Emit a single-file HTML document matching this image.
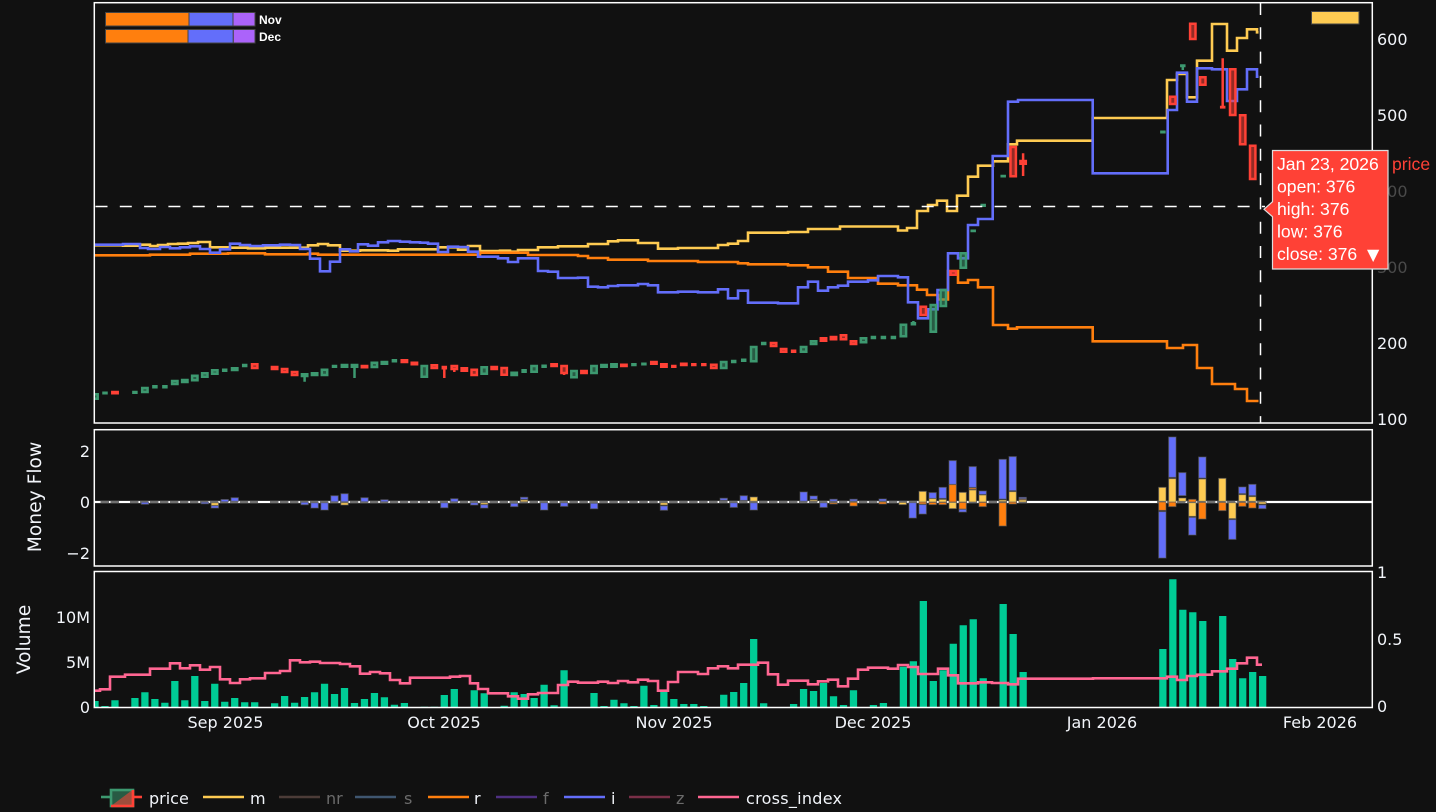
<!DOCTYPE html>
<html><head><meta charset="utf-8"><title>Chart</title>
<style>
html,body{margin:0;padding:0;background:#111;width:1436px;height:812px;overflow:hidden}
svg{display:block}
text{font-family:"DejaVu Sans",Verdana,sans-serif;font-size:16px;fill:#f2f5fa}
.a{font-family:"Liberation Sans",Arial,sans-serif;font-size:17.6px;fill:#fff}
.e{text-anchor:end}
.m{text-anchor:middle}
.t{font-size:18.7px}
.d{fill:#6b6b6b}
</style></head><body>
<svg width="1436" height="812" viewBox="0 0 1436 812" xmlns="http://www.w3.org/2000/svg">
<defs><clipPath id="c1"><rect x="94" y="3" width="1278" height="420"/></clipPath><clipPath id="c3"><rect x="94" y="571" width="1278" height="137"/></clipPath></defs>
<rect width="1436" height="812" fill="#111"/>

<!-- main panel lines -->
<g clip-path="url(#c1)" fill="none" stroke-width="2.6">
<path stroke="#fecb52" d="M94 245.3H123V245.7H140V244.7H150V246H158V245H168V244H178V243.7H188V243H198V242H210V247.3H230V247.7H248V248.3H265V247.7H308V245.3H318V244H328V245.3H340V250.7H360V250.3H388V250.7H398V249.3H438V247.3H458V249.7H468V246H480V251H500V250.7H510V251.7H518V250H538V247.3H558V246.3H588V244H608V241.3H618V240.3H638V243H658V248.7H678V248H718V245H728V243.7H738V241H748V232.7H788V232H808V229H840V226.5H898V230.5H907V228H917V211H928V205H937V200.7H947V211H957V195.7H968V176.7H978V165.7H993V161.3H1008V144.3H1017V140.7H1092.7V118H1167V80H1177V74H1187V97.3H1197V60.7H1212V24H1227V50.7H1237V38H1247V29.3H1257V32.3H1258.5"/>
<path stroke="#ff7f0e" d="M94 255.3H150V254.7H190V253.7H228V253.3H265V254.3H308V253.7H318V254.7H480V252.7H528V255H578V256H588V258H608V259.7H648V261H698V262H738V263.3H748V264.3H788V265.3H808V267.3H828V271.7H848V278H878V283.7H898V285.3H917V289.7H927V295H938V299.5H948V271H958V282.7H968V280H978V287.3H993V325H1008V328.7H1017V327.3H1092.7V341.3H1167V348H1183V345H1197V368H1212V384H1235V389H1247V401H1258.5"/>
<path stroke="#636efa" d="M94 244.7H123V244H140V248H148V249H160V247H170V248.3H180V247.3H190V246.3H200V249H210V252.7H220V249.3H230V243.7H240V245H250V246H263V245.3H280V244.7H290V245H300V249H310V258.7H320V271.3H330V261.7H340V249.3H350V251.3H358V244.3H368V245.7H378V242.3H388V241H400V241.7H410V242.3H420V242.7H428V243.7H438V252H448V246.7H458V247H468V251.7H478V256.7H498V258.3H508V262H518V258.3H538V271H548V271.7H558V278H578V277.7H588V286.7H598V287.3H608V286H618V285.3H638V284H648V285.3H658V292.3H678V291.7H698V292.3H718V289.3H728V298.3H738V290.7H748V302.7H778V303.3H798V287.3H808V281.7H818V290.7H828V287.3H838V285.7H848V281.7H868V280.3H878V276H898V277.3H908V302.3H918V318.3H928V309.3H937.5V290H948V253.3H958V258.3H968V225H978V219H992.7V156H1008V101.7H1018V100H1092.7V173.3H1167.7V110H1177V72.7H1187V101.7H1197V68.3H1212V69.3H1227V101H1237V89.3H1247V69.3H1257V76.7H1258.5"/>
<!-- green candles -->
<path stroke="#3d9970" stroke-width="2.5" fill="rgba(61,153,112,.55)" d="M92.3 394.3h5.4v4.4h-5.4zM103.5 392.7h3v.6h-3zM133.4 392h3v.7h-3zM142.2 388h5.4v4h-5.4zM153.4 386.3h3v1h-3zM163.4 386.3h3v1h-3zM172.1 381h5.4v3h-5.4zM182.1 380h5.4v2h-5.4zM192.1 375.7h5.4v4.6h-5.4zM202.1 373.3h5.4v3.4h-5.4zM212.1 370.3h5.4v3.4h-5.4zM223.2 369.7h3v1h-3zM232 368.3h5.4v1.7h-5.4zM243.2 365h3v1h-3zM301.9 374.3h5.4v1.7h-5.4zM304.6 377V381.7M311.9 373.3h5.4v1.7h-5.4zM321.8 369.7h5.4v5.3h-5.4zM333 366h3v.7h-3zM341.8 365h5.4v1.7h-5.4zM351.8 365h5.4v1.7h-5.4zM354.5 367.7V378M371.7 362.7h5.4v4.3h-5.4zM381.7 362h5.4v1.7h-5.4zM392.9 360.3h3v1h-3zM421.6 366h5.4v10.7h-5.4zM481.5 367.3h5.4v6.4h-5.4zM511.5 372.7h5.4v2.3h-5.4zM522.6 370.3h3v1.4h-3zM531.4 366h5.4v5.7h-5.4zM542.6 365.7h3v1h-3zM571.3 371h5.4v6.3h-5.4zM591.3 366h5.4v7h-5.4zM601.3 365h5.4v1.7h-5.4zM611.3 364.3h5.4v2.4h-5.4zM632.4 364.3h3v.7h-3zM642.4 363.7h3v.6h-3zM721 362h5.4v6h-5.4zM732.2 361h3v1h-3zM742.2 359.7h3v1h-3zM751 347h5.4v14.3h-5.4zM762.2 343h3v1h-3zM800.9 347h5.4v4.7h-5.4zM810.9 341.3h5.4v2.7h-5.4zM860.8 338.3h5.4v4h-5.4zM871.9 337h3v1h-3zM881.9 337h3v1h-3zM891.9 337h3v1h-3zM900.7 324.7h5.4v11.6h-5.4zM911.9 323.2h3v1h-3zM913.4 321V323M930.6 305h5.4v26.7h-5.4zM940.6 290h5.4v16h-5.4zM960.6 253.3h5.4v14.4h-5.4zM971.7 230.7h3v.3h-3zM981.7 205h3v.7h-3zM1001.7 176h3v.3h-3zM1161.4 131.7h3v.6h-3zM1181.3 65.5h3v.5h-3zM1182.8 66V70"/>
<!-- red candles -->
<path stroke="#ff4136" stroke-width="2.5" fill="rgba(255,65,54,.55)" d="M112.3 392h5.4v1.3h-5.4zM252 364.3h5.4v3.7h-5.4zM271.9 367h5.4v2h-5.4zM281.9 369h5.4v3h-5.4zM291.9 372h5.4v3h-5.4zM361.8 366h5.4v1.3h-5.4zM401.7 360.3h5.4v1.7h-5.4zM411.7 362.7h5.4v1.6h-5.4zM431.6 365.3h5.4v2.7h-5.4zM442.8 367h3v1.3h-3zM444.3 368V378M451.6 366h5.4v3h-5.4zM454.3 370V372M461.6 368.3h5.4v2.4h-5.4zM471.5 369.7h5.4v5.3h-5.4zM491.5 367h5.4v2h-5.4zM501.5 368h5.4v6.7h-5.4zM551.4 364.3h5.4v1.7h-5.4zM561.4 366h5.4v7h-5.4zM564.1 373V375M581.3 371h5.4v2h-5.4zM621.2 364.7h5.4v1.3h-5.4zM651.2 362h5.4v1.7h-5.4zM661.2 364.3h5.4v2.4h-5.4zM672.3 366h3v.7h-3zM681.1 363.7h5.4v1.3h-5.4zM692.3 364.3h3v.7h-3zM702.3 364.3h3v.7h-3zM711.1 364.7h5.4v3.3h-5.4zM770.9 343h5.4v3h-5.4zM780.9 349h5.4v2.7h-5.4zM792.1 350.7h3v1h-3zM820.8 338.3h5.4v2.4h-5.4zM830.8 337h5.4v2.3h-5.4zM840.8 335.3h5.4v4h-5.4zM850.8 341.3h5.4v2.7h-5.4zM920.6 306.7h5.4v8.3h-5.4zM950.6 271.3h5.4v3.4h-5.4zM1010.5 147h5.4v29.3h-5.4zM1020.4 161h5.4v2.7h-5.4zM1023.1 153.3V176M1170.1 96.7h5.4v7.3h-5.4zM1190.1 23.7h5.4v15.3h-5.4zM1200.1 77.3h5.4v7.4h-5.4zM1221.2 107h3v.4h-3zM1222.7 58.3V107M1230 69.3h5.4v45.7h-5.4zM1240 115.3h5.4v29h-5.4zM1250 145.7h5.4v33.3h-5.4z"/>
</g>

<!-- spikes -->
<path d="M95.5 206.5H1265" stroke="#fff" stroke-width="1.5" stroke-dasharray="12 12.3" fill="none"/>
<path d="M1260.5 3V423" stroke="#fff" stroke-width="1.5" stroke-dasharray="12 12.3" fill="none"/>

<!-- mini bars top-left -->
<g stroke="#444" stroke-width="1">
<rect x="105.5" y="12.5" width="83.5" height="13.5" fill="#ff7f0e"/>
<rect x="189" y="12.5" width="44" height="13.5" fill="#636efa"/>
<rect x="233" y="12.5" width="22" height="13.5" fill="#ab63fa"/>
<rect x="105.5" y="29.5" width="82.5" height="13.5" fill="#ff7f0e"/>
<rect x="188" y="29.5" width="45.3" height="13.5" fill="#636efa"/>
<rect x="233.3" y="29.5" width="21.7" height="13.5" fill="#ab63fa"/>
<rect x="1311.5" y="11.5" width="47.5" height="12.5" fill="#fecb52"/>
</g>
<text x="259" y="24" style="font-family:'Liberation Sans',Arial,sans-serif;font-size:12px;font-weight:bold;fill:#fff">Nov</text>
<text x="259" y="41" style="font-family:'Liberation Sans',Arial,sans-serif;font-size:12px;font-weight:bold;fill:#fff">Dec</text>

<!-- money flow -->
<path d="M94 502H1372" stroke="#fff" stroke-width="2.2"/>
<path d="M100.5 502H120M130 502H258M270 502H1028M1157 502H1267" stroke="#707070" stroke-width="2.2" stroke-dasharray="8.5 1.48" fill="none"/>
<g stroke="rgba(90,90,90,.65)" stroke-width="1">
<path fill="#636efa" d="M141.3 502.3h7.3v2h-7.3zM201.2 502.3h7.3v1.5h-7.3zM211.2 505.7h7.3v2.3h-7.3zM221.1 499.5h7.3v2.2h-7.3zM231.1 497.7h7.3v3.6h-7.3zM301 502.3h7.3v2.4h-7.3zM311 502.7h7.3v5.3h-7.3zM320.9 502.7h7.3v7.3h-7.3zM330.9 495.7h7.3v6h-7.3zM340.9 493.7h7.3v8h-7.3zM360.9 497.7h7.3v4h-7.3zM380.8 499.7h7.3v2h-7.3zM440.7 502.7h7.3v5h-7.3zM450.7 498.7h7.3v3h-7.3zM470.6 502.7h7.3v2.3h-7.3zM480.6 504.7h7.3v3.3h-7.3zM510.6 503.3h7.3v3.3h-7.3zM520.5 497.3h7.3v2h-7.3zM540.5 502.7h7.3v7.3h-7.3zM560.5 502.7h7.3v3.7h-7.3zM590.4 503.3h7.3v5.4h-7.3zM660.3 506h7.3v4.3h-7.3zM720.1 498.3h7.3v2h-7.3zM730.1 502.7h7.3v4.7h-7.3zM740.1 495.7h7.3v4.7h-7.3zM750.1 502.7h7.3v7.3h-7.3zM800 492h7.3v9.3h-7.3zM810 496h7.3v3.3h-7.3zM819.9 502.7h7.3v4.7h-7.3zM829.9 499.3h7.3v2h-7.3zM849.9 499.3h7.3v1.7h-7.3z"/>
<path fill="#fecb52" d="M211.2 502.7h7.3v2.7h-7.3zM340.9 502.7h7.3v2.3h-7.3zM480.6 502.7h7.3v1.7h-7.3zM520.5 500h7.3v1.7h-7.3zM660.3 502.7h7.3v2.3h-7.3zM750.1 497h7.3v4.3h-7.3zM810 500h7.3v1.3h-7.3z"/>
<path fill="#ff7f0e" d="M829.9 502.7h7.3v1.3h-7.3zM849.9 502.3h7.3v3.7h-7.3z"/>
</g>
<g transform="translate(880 430) scale(.33333)" stroke="rgba(90,90,90,.65)" stroke-width="3">
<path fill="#636efa" d="M-3 207h22v6h-22zM87 218h22v46h-22zM117 224h22v28h-22zM147 188h22v17h-22zM177 172h22v33h-22zM207 92h22v71h-22zM237 238h22v8h-22zM267 110h22v62h-22zM297 183h22v10h-22zM357 88h22v119h-22zM387 80h22v102h-22zM417 202h22v4h-22zM836 245h22v139h-22zM866 21h22v121h-22zM896 128h22v69h-22zM926 262h22v53h-22zM956 81h22v63h-22zM1046 269h22v59h-22zM1076 171h22v20h-22zM1106 163h22v34h-22zM1136 225h22v11h-22z"/>
<path fill="#ff7f0e" d="M-3 216h22v6h-22zM117 216h22v6h-22zM147 217h22v7h-22zM177 217h22v7h-22zM207 164h22v52h-22zM237 217h22v20h-22zM267 174h22v4h-22zM297 217h22v13h-22zM357 218h22v70h-22zM387 216h22v6h-22zM417 207h22v2h-22zM836 216h22v25h-22zM866 216h22v14h-22zM926 208h22v8h-22zM956 217h22v50h-22zM1016 217h22v25h-22zM1076 217h22v12h-22zM1106 217h22v17h-22z"/>
<path fill="#fecb52" d="M57 217h22v7h-22zM117 184h22v32h-22zM147 206h22v10h-22zM177 208h22v8h-22zM207 217h22v19h-22zM237 187h22v29h-22zM267 180h22v36h-22zM297 195h22v21h-22zM357 210h22v5h-22zM387 185h22v31h-22zM417 210h22v6h-22zM836 172h22v42h-22zM866 146h22v70h-22zM896 204h22v10h-22zM926 218h22v41h-22zM956 147h22v67h-22zM1016 145h22v69h-22zM1046 218h22v48h-22zM1076 194h22v20h-22zM1106 200h22v14h-22zM1136 216h22v6h-22z"/>
</g>

<!-- volume -->
<g clip-path="url(#c3)">
<g transform="translate(95 0) scale(9.98 1)">
<path fill="none" stroke="#00cc96" stroke-width=".73" d="M0 701V708M1 706V708M2 700.3V708M4 698V708M5 692.3V708M6 699V708M7 702.7V708M8 681V708M9 700.3V708M10 676V708M11 701V708M12 683.7V708M13 701.7V708M14 698V708M15 702.3V708M16 702.3V708M18 703.3V708M19 696V708M20 702.7V708M21 697V708M22 692.3V708M23 683.7V708M24 694V708M25 688V708M26 703V708M27 699V708M28 693V708M29 697.3V708M30 704.7V708M31 703V708M32 707V708M33 706.7V708M34 706.7V708M35 695V708M36 689V708M38 690.3V708M39 693.3V708M41 705.7V708M42 692.3V708M43 694V708M44 698V708M45 684.7V708M46 705.3V708M47 670.3V708M50 693V708M51 706V708M52 699.7V708M53 703.3V708M54 706V708M55 685.7V708M56 705V708M57 691.7V708M58 699V708M59 704V708M60 704V708M61 706V708M63 694.7V708M64 692V708M65 683V708M66 639V708M67 703.3V708M70 704V708M71 689V708M72 691V708M73 683V708M74 696.3V708M75 705V708M76 690.3V708M78 705V708M79 703V708M81 666.7V708M82 661.3V708M83 601V708M84 681V708M85 670.3V708M86 643.7V708M87 625.3V708M88 619.3V708M89 678.3V708M91 604V708M92 634V708M93 672V708M107 649V708M108 579.3V708M109 609.7V708M110 612.3V708M111 621V708M113 616V708M114 659V708M115 678.3V708M116 672V708M117 676V708"/>
</g>
<path fill="none" stroke="#ff6692" stroke-width="2.6" d="M94 690.7H100V689.3H110V676.7H125V674.7H150V668.7H170V663.3H180V668.3H190V665.3H200V669.7H210V667H220V679.3H230V683H240V679.3H250V678.3H265V673H280V671H290V660.3H300V662.3H310V661.7H320V663H340V664H350V666.3H360V673.7H370V672H380V673.3H390V680H400V683.3H410V677.7H450V676.7H460V676H470V683.3H478V689H488V693.3H508V696.3H518V698.7H528V694.3H538V693H558V685H568V681.7H578V682.7H598V681.7H608V683H618V681H628V682.3H638V679.7H648V681H658V690.7H668V682H678V672H698V674H708V668.3H718V666.3H728V668.3H738V664.7H758V662.7H768V674.3H778V684.7H788V680.7H808V684.3H818V681.3H828V679.7H838V686.3H848V678.7H858V669.7H868V667.7H888V668.7H898V665H908V667H918V674H938V668.7H948V675.3H958V683.3H978V682.3H992V683H1008V684.3H1018V678.7H1093V678.3H1167V676.7H1177V680H1187V676H1197V674.7H1212V671.3H1227V668.7H1237V663.3H1247V657.7H1257V664.7H1262"/>
</g>

<!-- panel frames -->
<g fill="none" stroke="#fff" stroke-width="1.5">
<rect x="94.3" y="2.7" width="1278" height="420.3"/>
<rect x="94.3" y="429.7" width="1278" height="136.3"/>
<rect x="94.3" y="571.5" width="1278" height="136"/>
</g>

<!-- axes -->
<text x="1377" y="45">600</text>
<text x="1377" y="121">500</text>
<text x="1377" y="197" style="fill:#4a4a4a">400</text>
<text x="1377" y="273" style="fill:#4a4a4a">300</text>
<text x="1377" y="349">200</text>
<text x="1377" y="425">100</text>
<text x="1377" y="578">1</text>
<text x="1377" y="645">0.5</text>
<text x="1377" y="712">0</text>
<text class="e" x="90" y="457">2</text>
<text class="e" x="90" y="508">0</text>
<text class="e" x="90" y="559">−2</text>
<text class="e" x="90" y="623">10M</text>
<text class="e" x="90" y="668">5M</text>
<text class="e" x="90" y="713">0</text>
<text class="m" x="225.5" y="728">Sep 2025</text>
<text class="m" x="444" y="728">Oct 2025</text>
<text class="m" x="674" y="728">Nov 2025</text>
<text class="m" x="873" y="728">Dec 2025</text>
<text class="m" x="1102" y="728">Jan 2026</text>
<text class="m" x="1320" y="728">Feb 2026</text>
<text class="m t" transform="translate(41 497) rotate(-90)">Money Flow</text>
<text class="m t" transform="translate(30 639.5) rotate(-90)">Volume</text>

<!-- tooltip -->
<path d="M1272.5 150.5H1388V269H1272.5V216.7L1264 209.3L1272.5 201.7Z" fill="#ff4136" stroke="#ddd" stroke-width="1.2"/>
<text class="a" x="1277" y="170">Jan 23, 2026</text>
<text class="a" x="1277" y="192.7">open: 376</text>
<text class="a" x="1277" y="215.2">high: 376</text>
<text class="a" x="1277" y="237.5">low: 376</text>
<text class="a" x="1277" y="260">close: 376</text>
<text class="a" x="1367" y="260" style="font-size:16px;font-family:'DejaVu Sans',sans-serif">▼</text>
<text class="a" x="1392" y="170" style="fill:#ff4136">price</text>

<!-- legend -->
<g fill="none" stroke-width="2.6">
<path d="M101 797H111" stroke="#3d9970"/>
<rect x="111" y="790" width="22" height="16" fill="rgba(61,153,112,.55)" stroke="#3d9970"/>
<path d="M133 789.5L111 806H133V789.5Z" fill="rgba(255,65,54,.55)" stroke="none"/>
<path d="M111 806H133V790" stroke="#ff4136"/>
<path d="M133 797H142" stroke="#ff4136"/>
<path d="M203 797H244" stroke="#fecb52"/>
<path d="M279 797H320" stroke="#4c3c38"/>
<path d="M355 797H396" stroke="#3f5670"/>
<path d="M428 797H469" stroke="#ff7f0e"/>
<path d="M496 797H537" stroke="#4f3082"/>
<path d="M564 797H605" stroke="#636efa"/>
<path d="M629 797H670" stroke="#7a2f48"/>
<path d="M698 797H739" stroke="#ff6692"/>
</g>
<text x="149" y="804">price</text>
<text x="250" y="804">m</text>
<text class="d" x="326" y="804">nr</text>
<text class="d" x="404" y="804">s</text>
<text x="474" y="804">r</text>
<text class="d" x="543" y="804">f</text>
<text x="611" y="804">i</text>
<text class="d" x="676" y="804">z</text>
<text x="746" y="804" textLength="96">cross_index</text>
</svg>
</body></html>
